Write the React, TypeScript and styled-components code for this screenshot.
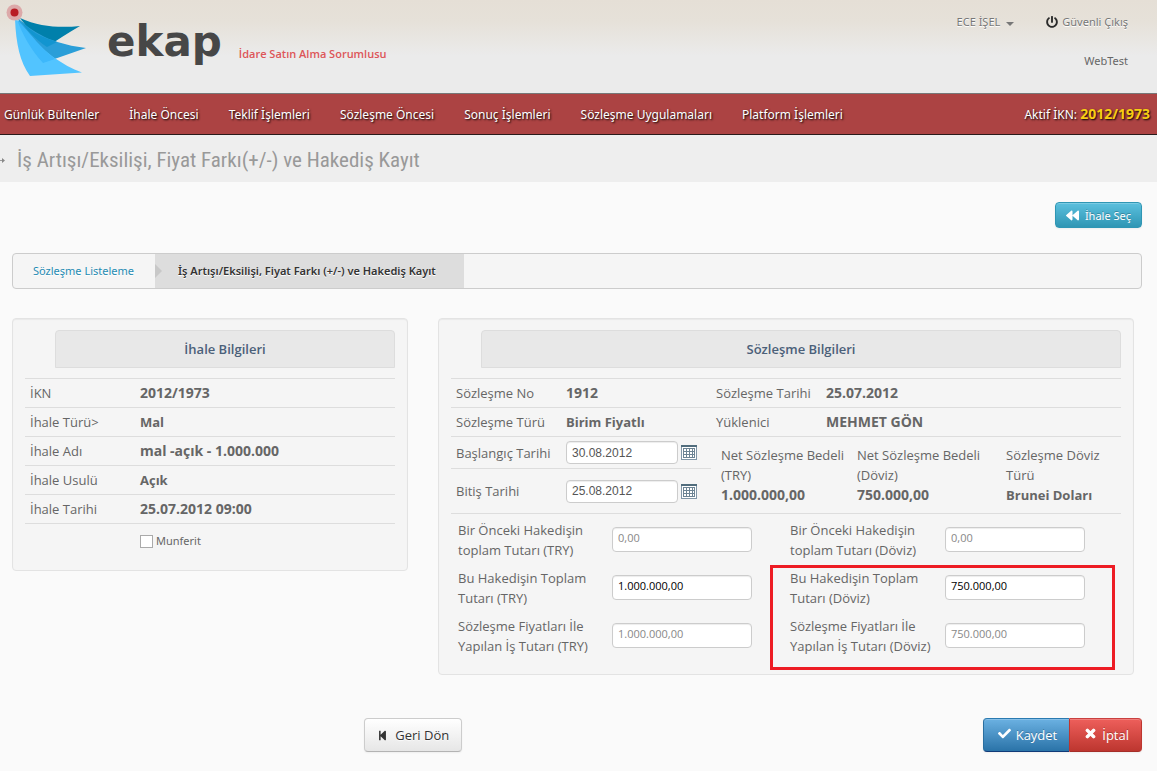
import React from "react";
import styled, { createGlobalStyle, css } from "styled-components";
import { FaBackward, FaStepBackward, FaCheck, FaTimes, FaPowerOff } from "react-icons/fa";

const sans = `"Open Sans", "Noto Sans", sans-serif`;
const wideSans = `"Noto Sans", "Open Sans", sans-serif`;

const GlobalStyle = createGlobalStyle`
  *, *::before, *::after { box-sizing: border-box; }
  body {
    margin: 0;
    background: #fafafa;
    color: #666;
    font: 13px/20px ${sans};
  }
  button, input { font-family: inherit; }
`;

const Header = styled.header`
  display: flex;
  justify-content: space-between;
  height: 93px;
  background: linear-gradient(#e5dfd6 0, #e6e1d9 22px, #ebebeb 56px);
`;

const Brand = styled.a`
  display: flex;
  align-items: flex-start;
  padding: 4px 0 0 6px;
  text-decoration: none;
`;

const BrandName = styled.span`
  margin: 11px 0 0 19px;
  font: bold 42px/54px "DejaVu Sans", sans-serif;
  color: #474747;
`;

const Role = styled.span`
  margin: 40px 0 0 17px;
  font-size: 11px;
  font-weight: 600;
  line-height: 20px;
  color: #dd5558;
`;

const Account = styled.div`
  display: flex;
  flex-direction: column;
  align-items: flex-end;
  gap: 19px;
  padding: 12px 29px 0 0;
  font-family: ${wideSans};
  font-size: 11px;
`;

const AccountLinks = styled.div`
  display: flex;
  gap: 32px;
  a {
    display: flex;
    align-items: center;
    gap: 4px;
    color: #777;
    text-decoration: none;
    text-shadow: 0 1px 0 #fff;
  }
  svg { color: #2b2b2b; }
`;

const Caret = styled.span`
  margin: 3px 0 0 2px;
  border: 4px solid transparent;
  border-top-color: #777;
  border-bottom: 0;
`;

const Nav = styled.nav`
  display: flex;
  align-items: center;
  gap: 30px;
  height: 42px;
  padding: 1px 7px 0 4px;
  border-top: 1px solid #777;
  border-bottom: 1px solid #2a1a1a;
  background: #ac4343;
  color: #fff;
  font-family: ${wideSans};
  font-size: 12px;
  text-shadow: 1px 1px 2px #000;
  white-space: nowrap;
  a { color: inherit; text-decoration: none; }
`;

const Active = styled.span`
  margin-left: auto;
  b { color: #f7ce13; font-size: 14px; }
`;

const TitleBar = styled.div`
  display: flex;
  align-items: center;
  gap: 12px;
  height: 47px;
  padding-top: 3px;
  background: #eee;
`;

const Title = styled.h1`
  margin: 0;
  font: 21px/30px "Roboto Condensed", Roboto, sans-serif;
  color: #999;
`;

const Main = styled.main`
  padding: 20px 15px 16px 12px;
`;

const Actions = styled.div`
  display: flex;
  justify-content: flex-end;
`;

type Tone = "info" | "plain" | "primary" | "danger";

const tones = {
  info: css`
    border-color: #2f96b4;
    background: linear-gradient(#5bc0de, #2f96b4);
    color: #fff;
    text-shadow: 0 -1px 0 rgba(0, 0, 0, 0.25);
  `,
  plain: css`
    border-color: #ccc #ccc #b3b3b3;
    background: linear-gradient(#fff, #e6e6e6);
    color: #333;
    text-shadow: 0 1px 1px rgba(255, 255, 255, 0.75);
  `,
  primary: css`
    border-color: #2a7ab0 #2a6fa0 #103a78;
    background: linear-gradient(#6bb1e2, #2a73a8);
    color: #fff;
    text-shadow: 0 -1px 0 rgba(0, 0, 0, 0.25);
  `,
  danger: css`
    border-color: #c94040 #bd362f #a52e28;
    background: linear-gradient(#ee5f5b, #bd362f);
    color: #fff;
    text-shadow: 0 -1px 0 rgba(0, 0, 0, 0.25);
  `,
};

const Button = styled.button<{ $tone: Tone; $small?: boolean }>`
  display: inline-flex;
  align-items: center;
  justify-content: center;
  gap: ${(p) => (p.$small ? 6 : 5)}px;
  height: ${(p) => (p.$small ? 26 : 34)}px;
  padding: 0 ${(p) => (p.$small ? 10 : 12)}px;
  border: 1px solid;
  border-radius: 4px;
  font-size: ${(p) => (p.$small ? 11 : 13)}px;
  white-space: nowrap;
  box-shadow: inset 0 1px 0 rgba(255, 255, 255, 0.2), 0 1px 2px rgba(0, 0, 0, 0.05);
  ${(p) => p.$small && `font-family: ${wideSans};`}
  ${(p) => tones[p.$tone]}
`;

const ButtonGroup = styled.div`
  display: flex;
  ${Button} { padding: 0 12px 0 14px; }
  ${Button}:first-child { border-radius: 4px 0 0 4px; border-right: 0; }
  ${Button}:last-child { border-radius: 0 4px 4px 0; }
  svg { margin-bottom: 3px; }
`;

const Steps = styled.ol`
  display: flex;
  height: 36px;
  margin: 25px 0 29px;
  padding: 0;
  list-style: none;
  border: 1px solid #ccc;
  border-radius: 4px;
  background: #f5f5f5;
  font-family: ${wideSans};
  font-size: 11px;
  line-height: 34px;
`;

const Step = styled.li<{ $current?: boolean }>`
  display: flex;
  align-items: center;
  padding: 0 21px 0 20px;
  text-shadow: 0 1px 0 #fff;
  a { color: #1f8bb3; text-decoration: none; }
  ${(p) =>
    p.$current &&
    css`
      padding: 0 28px 0 0;
      background: #ddd;
      color: #333;
      font-weight: 600;
      &::before {
        content: "";
        margin-right: 16px;
        border: 7px solid transparent;
        border-left-color: #c8c8c8;
        border-right: 0;
      }
    `}
`;

const Panels = styled.div`
  display: grid;
  grid-template-columns: 396fr 696fr;
  align-items: start;
  gap: 30px;
  padding-right: 8px;
`;

const Panel = styled.section`
  min-width: 0;
  padding: 11px 12px 12px;
  border: 1px solid #e3e3e3;
  border-radius: 4px;
  background: #f5f5f5;
  box-shadow: inset 0 1px 1px rgba(0, 0, 0, 0.05);
`;

const PanelTitle = styled.h2`
  margin: 0 0 10px 30px;
  border: 1px solid #ddd;
  border-radius: 4px 4px 0 0;
  background: #e8e8e8;
  color: #4b6079;
  font-size: 13px;
  font-weight: 600;
  line-height: 36px;
  text-align: center;
`;

const Facts = styled.table<{ $closed?: boolean }>`
  width: 100%;
  border-collapse: separate;
  border-spacing: 0;
  table-layout: fixed;
  border-bottom: ${(p) => (p.$closed ? "1px solid #ddd" : 0)};
  th, td {
    height: 29px;
    padding: 0 5px;
    border-top: 1px solid #ddd;
    text-align: left;
    white-space: nowrap;
  }
  th { font-weight: 400; }
`;

const NameColumn = styled.col`
  width: 110px;
`;

const ValueColumn = styled.col`
  width: 150px;
`;

const FactValue = styled.td<{ $large: boolean }>`
  font-weight: 700;
  font-size: ${(p) => (p.$large ? 14 : 13)}px;
`;

const CheckLine = styled.label`
  display: flex;
  align-items: center;
  gap: 3px;
  margin: 7px 0 7px 115px;
  font-family: ${wideSans};
  font-size: 11px;
  input {
    appearance: none;
    width: 13px;
    height: 13px;
    margin: 0;
    border: 1px solid #aaa;
    background: #fff;
  }
`;

const Period = styled.div`
  display: grid;
  grid-template-columns: 260px 136px 149px 1fr;
  border-top: 1px solid #ddd;
  border-bottom: 1px solid #ddd;
`;

const DateRow = styled.div<{ $last?: boolean }>`
  display: flex;
  align-items: center;
  height: ${(p) => (p.$last ? 44 : 32)}px;
  padding-left: 5px;
  border-bottom: ${(p) => (p.$last ? 0 : "1px solid #ddd")};
  label { width: 110px; }
`;

const Field = styled.input`
  min-width: 0;
  width: 140px;
  height: 25px;
  padding: 0 5px 5px;
  border: 1px solid #ccc;
  border-radius: 4px;
  background: #fff;
  color: #000;
  font-size: 11px;
  box-shadow: inset 0 1px 1px rgba(0, 0, 0, 0.075);
  &:disabled { color: #888; }
`;

const DateField = styled(Field)`
  width: 112px;
  height: 23px;
  margin-right: 3px;
  padding: 0 5px;
  color: #555;
  font: 12px "Liberation Sans", sans-serif;
`;

const IconButton = styled.button`
  display: flex;
  padding: 1px 0 0;
  border: 0;
  background: none;
`;

const Amount = styled.div`
  padding: 8px 0 0 10px;
`;

const AmountValue = styled.strong<{ $large: boolean }>`
  display: block;
  font-size: ${(p) => (p.$large ? 14 : 13)}px;
`;

const Payments = styled.div`
  display: grid;
  grid-template-columns: 332fr 338fr;
  padding-bottom: 4px;
`;

const PaymentColumn = styled.div`
  padding-left: 7px;
`;

const PaymentRow = styled.div`
  display: grid;
  grid-template-columns: 154px 140px;
  align-items: start;
  padding: 6px 0 2px;
  ${Field} { margin-top: 7px; }
`;

const Highlight = styled.div`
  position: relative;
  &::after {
    content: "";
    position: absolute;
    inset: 3px 6px -12px -20px;
    border: 3px solid #ed1c24;
    pointer-events: none;
  }
`;

const HighlightColumn = styled(PaymentColumn)`
  ${PaymentRow} { grid-template-columns: 155px 140px; }
`;

const FormActions = styled.div`
  display: grid;
  grid-template-columns: 352fr auto 520fr auto;
  margin-top: 43px;
  > ${Button} { grid-column: 2; gap: 7px; }
  > div { grid-column: 4; }
`;

const Logo = () => (
  <svg width="82" height="74" viewBox="6 4 82 74" aria-hidden="true">
    <path d="M20 18C40 27 60 28 80 26C68 33 57 40 47 47C36 38 27 28 20 18Z" fill="#0080ab" />
    <path d="M18 18C35 36 60 45 86 48L43 63C30 50 22 34 18 18Z" fill="#2a9ed8" />
    <path d="M20 19C29 31 41 37 57 42L47 47C35 39 26 30 20 19Z" fill="#1295d0" />
    <path d="M15 19C17 20 24 27 31 36C44 52 62 65 82 72.500L30 76C20 62 16 44 15 19Z" fill="#52c4ff" />
    <path d="M17 19C31 35 43 50 55 59L43 63C31 50 22 34 17 19Z" fill="#3db8fb" />
    <circle cx="14.500" cy="12.500" r="8" fill="#dca9a9" />
    <circle cx="14.500" cy="12.500" r="4" fill="#b81c24" />
  </svg>
);

const CalendarIcon = () => (
  <svg width="16" height="16" viewBox="0 0 16 16" aria-hidden="true" shapeRendering="crispEdges">
    <path d="M0 0h16v15H0z" fill="#8297a8" />
    <path d="M0 0h16v2H0z" fill="#516d7d" />
    <path d="M1 2h14v12H1z" fill="#fff" />
    <path d="M2 3h12v10H2z" fill="#6d8494" />
    <path
      d="M3 4h2v2H3zM6 4h2v2H6zM9 4h2v2H9zM12 4h1v2h-1zM3 7h2v2H3zM6 7h2v2H6zM9 7h2v2H9zM12 7h1v2h-1zM3 10h2v2H3zM6 10h2v2H6zM9 10h2v2H9zM12 10h1v2h-1z"
      fill="#fff"
    />
  </svg>
);

const ArrowIcon = () => (
  <svg width="5" height="7" viewBox="0 0 5 7" aria-hidden="true">
    <path d="M0 3.500H3" stroke="#999" />
    <path d="M2 1L5 3.500L2 6Z" fill="#888" />
  </svg>
);

const menu = [
  "Günlük Bültenler",
  "İhale Öncesi",
  "Teklif İşlemleri",
  "Sözleşme Öncesi",
  "Sonuç İşlemleri",
  "Sözleşme Uygulamaları",
  "Platform İşlemleri",
];

const tender = [
  ["İKN", "2012/1973"],
  ["İhale Türü>", "Mal"],
  ["İhale Adı", "mal -açık - 1.000.000"],
  ["İhale Usulü", "Açık"],
  ["İhale Tarihi", "25.07.2012 09:00"],
];

const contract = [
  ["Sözleşme No", "1912", "Sözleşme Tarihi", "25.07.2012"],
  ["Sözleşme Türü", "Birim Fiyatlı", "Yüklenici", "MEHMET GÖN"],
];

// Figures and all-capital names are set one size larger than ordinary words.
const isLarge = (value: string) => /\d|[A-Z]{2}/.test(value);

const Value = ({ children }: { children: string }) => (
  <FactValue $large={isLarge(children)}>{children}</FactValue>
);

type SumProps = { lines: [string, string]; value: string };

const Sum = ({ lines, value }: SumProps) => (
  <Amount>
    {lines[0]}
    <br />
    {lines[1]}
    <AmountValue $large={isLarge(value)}>{value}</AmountValue>
  </Amount>
);

type PaymentProps = { id: string; lines: [string, string]; value: string; disabled?: boolean };

const Payment = ({ id, lines, value, disabled }: PaymentProps) => (
  <PaymentRow>
    <label htmlFor={id}>
      {lines[0]}
      <br />
      {lines[1]}
    </label>
    <Field id={id} defaultValue={value} disabled={disabled} />
  </PaymentRow>
);

export default function App() {
  return (
    <>
      <GlobalStyle />
      <Header>
        <Brand href="#">
          <Logo />
          <BrandName>ekap</BrandName>
          <Role>İdare Satın Alma Sorumlusu</Role>
        </Brand>
        <Account>
          <AccountLinks>
            <a href="#">
              ECE İŞEL <Caret />
            </a>
            <a href="#">
              <FaPowerOff size={12} /> Güvenli Çıkış
            </a>
          </AccountLinks>
          <span>WebTest</span>
        </Account>
      </Header>
      <Nav>
        {menu.map((item) => (
          <a href="#" key={item}>
            {item}
          </a>
        ))}
        <Active>
          Aktif İKN: <b>2012/1973</b>
        </Active>
      </Nav>
      <TitleBar>
        <ArrowIcon />
        <Title>İş Artışı/Eksilişi, Fiyat Farkı(+/-) ve Hakediş Kayıt</Title>
      </TitleBar>
      <Main>
        <Actions>
          <Button type="button" $tone="info" $small>
            <FaBackward size={13} /> İhale Seç
          </Button>
        </Actions>
        <Steps>
          <Step>
            <a href="#">Sözleşme Listeleme</a>
          </Step>
          <Step $current>İş Artışı/Eksilişi, Fiyat Farkı (+/-) ve Hakediş Kayıt</Step>
        </Steps>
        <Panels>
          <Panel>
            <PanelTitle>İhale Bilgileri</PanelTitle>
            <Facts $closed>
              <colgroup>
                <NameColumn />
                <col />
              </colgroup>
              <tbody>
                {tender.map(([name, value]) => (
                  <tr key={name}>
                    <th scope="row">{name}</th>
                    <Value>{value}</Value>
                  </tr>
                ))}
              </tbody>
            </Facts>
            <CheckLine>
              <input type="checkbox" /> Munferit
            </CheckLine>
          </Panel>
          <Panel>
            <PanelTitle>Sözleşme Bilgileri</PanelTitle>
            <Facts>
              <colgroup>
                <NameColumn />
                <ValueColumn />
                <NameColumn />
                <col />
              </colgroup>
              <tbody>
                {contract.map(([a, b, c, d]) => (
                  <tr key={a}>
                    <th scope="row">{a}</th>
                    <Value>{b}</Value>
                    <th scope="row">{c}</th>
                    <Value>{d}</Value>
                  </tr>
                ))}
              </tbody>
            </Facts>
            <Period>
              <div>
                <DateRow>
                  <label htmlFor="start">Başlangıç Tarihi</label>
                  <DateField id="start" defaultValue="30.08.2012" />
                  <IconButton type="button" aria-label="Başlangıç Tarihi">
                    <CalendarIcon />
                  </IconButton>
                </DateRow>
                <DateRow $last>
                  <label htmlFor="end">Bitiş Tarihi</label>
                  <DateField id="end" defaultValue="25.08.2012" />
                  <IconButton type="button" aria-label="Bitiş Tarihi">
                    <CalendarIcon />
                  </IconButton>
                </DateRow>
              </div>
              <Sum lines={["Net Sözleşme Bedeli", "(TRY)"]} value="1.000.000,00" />
              <Sum lines={["Net Sözleşme Bedeli", "(Döviz)"]} value="750.000,00" />
              <Sum lines={["Sözleşme Döviz", "Türü"]} value="Brunei Doları" />
            </Period>
            <Payments>
              <PaymentColumn>
                <Payment id="prevTry" lines={["Bir Önceki Hakedişin", "toplam Tutarı (TRY)"]} value="0,00" disabled />
                <Payment id="curTry" lines={["Bu Hakedişin Toplam", "Tutarı (TRY)"]} value="1.000.000,00" />
                <Payment id="workTry" lines={["Sözleşme Fiyatları İle", "Yapılan İş Tutarı (TRY)"]} value="1.000.000,00" disabled />
              </PaymentColumn>
              <HighlightColumn>
                <Payment id="prevFx" lines={["Bir Önceki Hakedişin", "toplam Tutarı (Döviz)"]} value="0,00" disabled />
                <Highlight>
                  <Payment id="curFx" lines={["Bu Hakedişin Toplam", "Tutarı (Döviz)"]} value="750.000,00" />
                  <Payment id="workFx" lines={["Sözleşme Fiyatları İle", "Yapılan İş Tutarı (Döviz)"]} value="750.000,00" disabled />
                </Highlight>
              </HighlightColumn>
            </Payments>
          </Panel>
        </Panels>
        <FormActions>
          <Button type="button" $tone="plain">
            <FaStepBackward size={11} /> Geri Dön
          </Button>
          <ButtonGroup>
            <Button type="submit" $tone="primary">
              <FaCheck size={13} /> Kaydet
            </Button>
            <Button type="button" $tone="danger">
              <FaTimes size={13} strokeWidth={40} stroke="currentColor" /> İptal
            </Button>
          </ButtonGroup>
        </FormActions>
      </Main>
    </>
  );
}
